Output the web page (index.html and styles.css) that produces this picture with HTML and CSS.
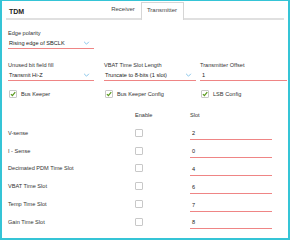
FILE: index.html
```html
<!DOCTYPE html>
<html lang="en">
<head>
    <meta charset="UTF-8">
    <meta name="viewport" content="width=device-width, initial-scale=1.0">
    <title>TDM</title>
    <link rel="stylesheet" href="styles.css">
</head>
<body>
    <div class="panel">
        <!-- Header with tabs -->
        <div class="header">
            <div class="title">TDM</div>
            <div class="tabs">
                <div class="tab">Receiver</div>
                <div class="tab active">Transmitter</div>
            </div>
        </div>

        <div class="content">
            <div class="field first">
                <div class="label">Edge polarity</div>
                <div class="select w85">Rising edge of SBCLK<span class="chevron"><svg viewBox="0 0 8 5" width="7" height="4"><polyline points="1,1 4,4 7,1" fill="none" stroke="#6bb8e4" stroke-width="1"/></svg></span></div>
            </div>

            <div class="row3">
                <div class="field">
                    <div class="label">Unused bit field fill</div>
                    <div class="select w85">Transmit Hi-Z<span class="chevron"><svg viewBox="0 0 8 5" width="7" height="4"><polyline points="1,1 4,4 7,1" fill="none" stroke="#6bb8e4" stroke-width="1"/></svg></span></div>
                </div>
                <div class="field">
                    <div class="label">VBAT Time Slot Length</div>
                    <div class="select w91">Truncate to 8-bits (1 slot)<span class="chevron"><svg viewBox="0 0 8 5" width="7" height="4"><polyline points="1,1 4,4 7,1" fill="none" stroke="#6bb8e4" stroke-width="1"/></svg></span></div>
                </div>
                <div class="field">
                    <div class="label">Transmitter Offset</div>
                    <div class="select w85">1</div>
                </div>
            </div>

            <div class="row3 checks">
                <label class="check"><span class="box on"><svg viewBox="0 0 8 8" width="6" height="6"><polyline points="1.2,4.2 3.2,6.2 7,1.5" fill="none" stroke="#5a9a1e" stroke-width="1.6"/></svg></span>Bus Keeper</label>
                <label class="check"><span class="box on"><svg viewBox="0 0 8 8" width="6" height="6"><polyline points="1.2,4.2 3.2,6.2 7,1.5" fill="none" stroke="#5a9a1e" stroke-width="1.6"/></svg></span>Bus Keeper Config</label>
                <label class="check"><span class="box on"><svg viewBox="0 0 8 8" width="6" height="6"><polyline points="1.2,4.2 3.2,6.2 7,1.5" fill="none" stroke="#5a9a1e" stroke-width="1.6"/></svg></span>LSB Config</label>
            </div>

            <!-- Slot table -->
            <div class="slots">
                <div class="slot-head">
                    <span></span>
                    <span>Enable</span>
                    <span>Slot</span>
                </div>
                <div class="slot-row"><span>V-sense</span><span class="box"></span><span class="slot-val">2</span></div>
                <div class="slot-row"><span>I - Sense</span><span class="box"></span><span class="slot-val">0</span></div>
                <div class="slot-row"><span>Decimated PDM Time Slot</span><span class="box"></span><span class="slot-val">4</span></div>
                <div class="slot-row"><span>VBAT Time Slot</span><span class="box"></span><span class="slot-val">6</span></div>
                <div class="slot-row"><span>Temp Time Slot</span><span class="box"></span><span class="slot-val">7</span></div>
                <div class="slot-row"><span>Gain Time Slot</span><span class="box"></span><span class="slot-val">8</span></div>
            </div>
        </div>
    </div>
</body>
</html>
```

FILE: styles.css
```css
/* Base Styles */
html, body {
    margin: 0;
    padding: 0;
    background: #fff;
    font-family: 'Liberation Sans', Arial, sans-serif;
    font-size: 5.6px;
    color: #333;
}

/* Panel */
.panel {
    width: 290px;
    height: 240px;
    box-sizing: border-box;
    border: 2px solid #35c4d6;
    border-top-width: 1px;
    overflow: hidden;
}

/* Header */
.header {
    display: flex;
    justify-content: space-between;
    align-items: flex-end;
    height: 17px;
    margin: 0 4px 0 4px;
    border-bottom: 2px solid #e0e0e0;
}

.title {
    font-weight: bold;
    font-size: 7px;
    color: #222;
    padding-left: 3px;
    align-self: center;
    margin-top: 3px;
}

.tabs {
    display: flex;
    margin-right: 100px;
    margin-bottom: -2px;
}

.tab {
    height: 16px;
    line-height: 15px;
    padding: 0 6px;
    box-sizing: border-box;
    color: #444;
    font-size: 6px;
}

.tab.active {
    border: 1px solid #d6d6d6;
    border-bottom: none;
    background: #fff;
    height: 18px;
    padding: 0 6px 0 5px;
}

/* Content */
.content {
    padding: 0 6px;
}

.field.first {
    margin-top: 9px;
}

.label {
    line-height: 8px;
    height: 8px;
}

.select {
    position: relative;
    height: 10px;
    line-height: 10px;
    margin-top: 1px;
    padding-left: 1px;
    border-bottom: 1px solid #ef8585;
    color: #222;
}

.w85 { width: 85px; }
.w91 { width: 91px; }

.chevron {
    position: absolute;
    right: 4px;
    top: 3px;
    line-height: 0;
}

.row3 {
    display: grid;
    grid-template-columns: 96px 96px 86px;
    margin-top: 12px;
}

.row3 .field:nth-child(3) .select {
    padding-left: 2px;
}

/* Checkboxes */
.checks {
    margin-top: 9px;
}

.check {
    display: flex;
    align-items: center;
    gap: 4px;
    height: 8px;
    padding-left: 1px;
}

.box {
    display: inline-flex;
    align-items: center;
    justify-content: center;
    width: 8px;
    height: 8px;
    box-sizing: border-box;
    border: 1px solid #c8c8c8;
    border-radius: 1px;
    background: #fff;
}

/* Slot table */
.slots {
    margin-top: 13px;
}

.slot-head,
.slot-row {
    display: grid;
    grid-template-columns: 127px 55px 82px;
    align-items: center;
}

.slot-head {
    height: 8px;
    line-height: 8px;
    margin-bottom: 5px;
}

.slot-row {
    height: 17.8px;
}

.slot-val {
    height: 11px;
    line-height: 10px;
    padding-left: 2px;
    margin-top: 3px;
    border-bottom: 1px solid #ef8585;
    color: #222;
}
```
